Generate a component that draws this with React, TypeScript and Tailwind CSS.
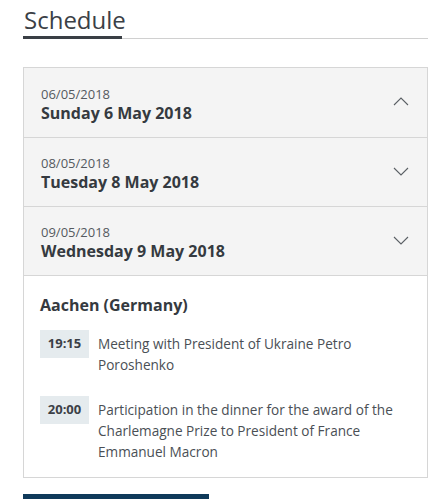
type Day = {
  short: string;
  long: string;
  open?: boolean;
};

const days: Day[] = [
  { short: '06/05/2018', long: 'Sunday 6 May 2018', open: true },
  { short: '08/05/2018', long: 'Tuesday 8 May 2018' },
  { short: '09/05/2018', long: 'Wednesday 9 May 2018' },
];

const items = [
  { time: '19:15', text: 'Meeting with President of Ukraine Petro Poroshenko' },
  {
    time: '20:00',
    text: 'Participation in the dinner for the award of the Charlemagne Prize to President of France Emmanuel Macron',
  },
];

// Chevron fin, comme sur la maquette
function Chevron({ up }: { up?: boolean }) {
  return (
    <svg width="16" height="9" viewBox="0 0 16 9" fill="none" className="-mt-[2px]">
      <polyline
        points={up ? '1,8 8,1 15,8' : '1,1 8,8 15,1'}
        stroke="#5a5f64"
        strokeWidth="1.1"
      />
    </svg>
  );
}

export default function App() {
  return (
    <div
      className="w-[442px] h-[499px] overflow-hidden bg-white px-[23px] pt-[3px]"
      style={{ fontFamily: '"Open Sans", "Liberation Sans", sans-serif' }}
    >
      <div className="flex border-b border-[#d0d0d0] w-[405px]">
        <h2 className="text-[24px] leading-[33px] text-[#3b4046] pl-[1px] border-b-[3px] border-[#3a3f45] -mb-[1px] w-[99px]">
          Schedule
        </h2>
      </div>

      <div className="mt-[28px] w-[405px] border border-[#d6d6d6]">
        {days.map((d, i) => (
          <div
            key={d.short}
            className={`flex items-center justify-between bg-[#f4f4f4] h-[69px] pl-[17px] pr-[18px] ${
              i > 0 ? 'border-t border-[#d6d6d6]' : ''
            }`}
          >
            <div className="pt-[3px]">
              <div className="text-[13px] leading-[17px] text-[#555a5f]">{d.short}</div>
              <div className="text-[16px] leading-[20px] font-bold text-[#353a40]">{d.long}</div>
            </div>
            <Chevron up={d.open} />
          </div>
        ))}

        <div className="border-t border-[#d6d6d6] bg-white pl-[16px] pr-[6px] pt-[18px] pb-[15px]">
          <h3 className="text-[16px] leading-[22px] font-bold text-[#353a40]">Aachen (Germany)</h3>
          <div className="mt-[14px] flex flex-col gap-[21px]">
            {items.map((it) => (
              <div key={it.time} className="flex items-start gap-[9px]">
                <span className="shrink-0 w-[49px] h-[28px] flex items-center justify-center bg-[#e5ebee] text-[13px] font-bold text-[#3b4046]">
                  {it.time}
                </span>
                <p className="text-[13.6px] leading-[21px] text-[#4a4f55] pt-[3px]">{it.text}</p>
              </div>
            ))}
          </div>
        </div>
      </div>

      <div className="mt-[16px] w-[186px] h-[10px] bg-[#0f3a5a]" />
    </div>
  );
}
